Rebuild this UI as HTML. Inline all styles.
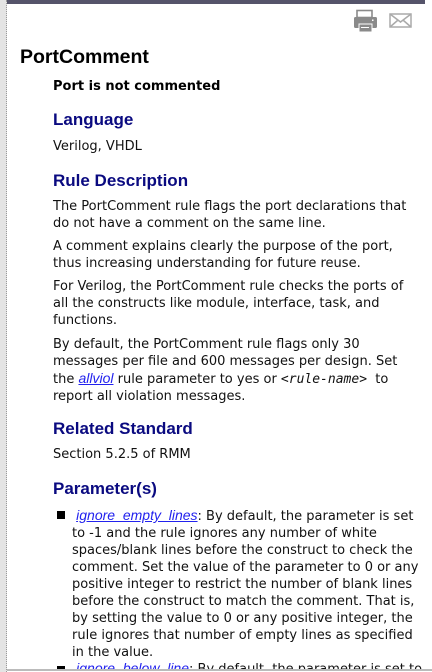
<!DOCTYPE html>
<html><head><meta charset="utf-8"><style>
html,body{margin:0;padding:0;width:432px;height:672px;overflow:hidden;background:#fff;position:relative}
.l{position:absolute;left:53px;white-space:nowrap;font-family:"DejaVu Sans",sans-serif;font-size:13px;line-height:17px;color:#111}
.h{position:absolute;left:53px;white-space:nowrap;font-family:"Liberation Sans",sans-serif;font-size:17px;font-weight:bold;color:#0a0a80;line-height:20px}
a{color:#2222ee;font-style:italic;font-family:"Liberation Sans",sans-serif;font-size:14px;text-decoration:underline}
code{font-family:"DejaVu Sans Mono",monospace;font-style:italic;font-size:13px}
.li{left:72px}
</style></head><body>
<div style="position:absolute;left:0;top:0;width:6px;height:672px;background:#e4e4e4;border-right:1px dotted #999"></div>
<div style="position:absolute;left:7px;top:0;width:418px;height:4px;background:#55546a"></div>
<div style="position:absolute;left:7px;top:669px;width:425px;height:2px;background:#bbb"></div>
<svg style="position:absolute;left:352px;top:8px" width="28" height="26" viewBox="0 0 28 26">
<rect x="5" y="2.5" width="15" height="7" fill="#fff" stroke="#8a8a8a" stroke-width="1.6"/>
<rect x="2" y="9" width="23" height="11" rx="1.5" fill="#8a8a8a"/>
<rect x="7" y="16" width="13" height="8" fill="#8a8a8a" stroke="#fff" stroke-width="1"/>
<rect x="9" y="19" width="8" height="1" fill="#fff"/>
<rect x="20" y="11.5" width="1.5" height="1.5" fill="#fff"/>
</svg>
<svg style="position:absolute;left:389px;top:13px" width="24" height="16" viewBox="0 0 24 16">
<rect x="1" y="1" width="21" height="13" fill="none" stroke="#aaa" stroke-width="1.5"/>
<path d="M1 1 L11.5 9 L22 1 M1 14 L8.5 7.5 M22 14 L14.5 7.5" fill="none" stroke="#aaa" stroke-width="1.5"/>
</svg>
<div style="position:absolute;left:20px;top:46px;font-family:'Liberation Sans',sans-serif;font-weight:bold;font-size:19.5px;color:#000">PortComment</div>
<div class="l" style="top:78px;font-weight:bold;color:#000">Port is not commented</div>
<div class="h" style="top:110px">Language</div>
<div class="l" style="top:138px">Verilog, VHDL</div>
<div class="h" style="top:171px">Rule Description</div>
<div class="l" style="top:198px">The PortComment rule flags the port declarations that<br>do not have a comment on the same line.</div>
<div class="l" style="top:238px">A comment explains clearly the purpose of the port,<br>thus increasing understanding for future reuse.</div>
<div class="l" style="top:278px">For Verilog, the PortComment rule checks the ports of<br>all the constructs like module, interface, task, and<br>functions.</div>
<div class="l" style="top:336px">By default, the PortComment rule flags only 30<br>messages per file and 600 messages per design. Set<br>the <a>allviol</a> rule parameter to yes or <code>&lt;rule-name&gt;</code>&nbsp; to<br>report all violation messages.</div>
<div class="h" style="top:419px">Related Standard</div>
<div class="l" style="top:446px">Section 5.2.5 of RMM</div>
<div class="h" style="top:479px">Parameter(s)</div>
<div style="position:absolute;left:57px;top:511px;width:8px;height:8px;background:#000"></div>
<div class="l li" style="top:507px">&nbsp;<a>ignore_empty_lines</a>: By default, the parameter is set<br>to -1 and the rule ignores any number of white<br>spaces/blank lines before the construct to check the<br>comment. Set the value of the parameter to 0 or any<br>positive integer to restrict the number of blank lines<br>before the construct to match the comment. That is,<br>by setting the value to 0 or any positive integer, the<br>rule ignores that number of empty lines as specified<br>in the value.</div>
<div style="position:absolute;left:57px;top:666px;width:8px;height:3px;background:#000"></div>
<div class="l li" style="top:660px;height:9px;overflow:hidden">&nbsp;<a>ignore_below_line</a>: By default, the parameter is set to</div>
</body></html>
